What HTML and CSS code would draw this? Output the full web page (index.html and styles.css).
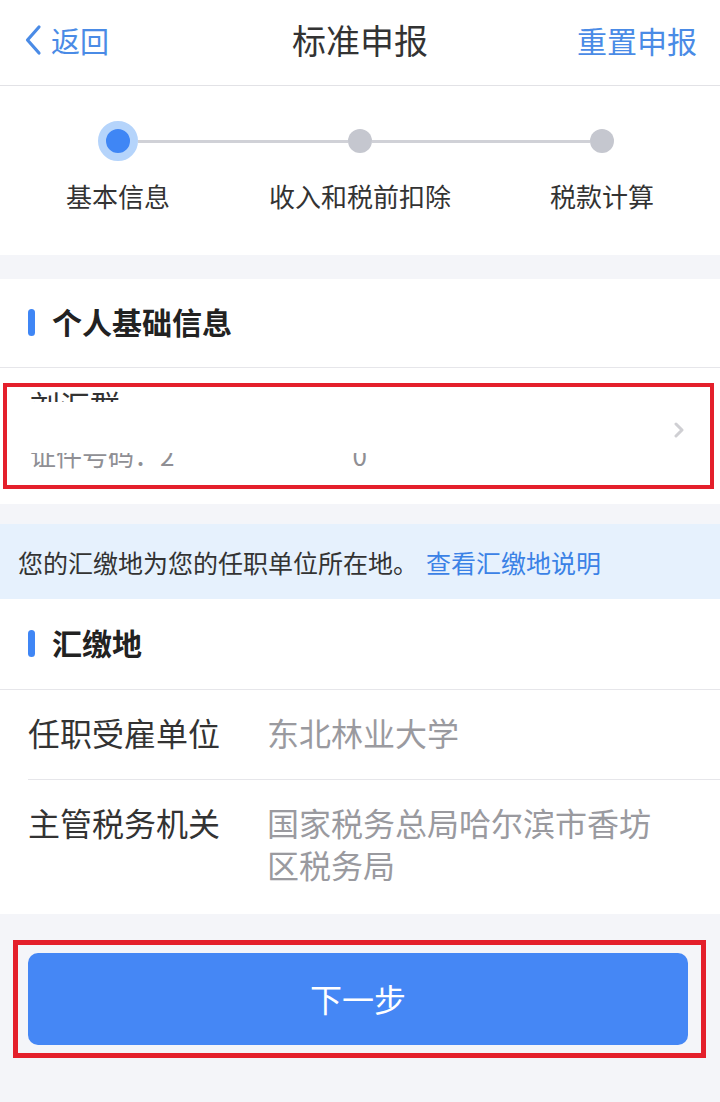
FILE: index.html
```html
<!DOCTYPE html>
<html lang="zh-CN">
<head>
<meta charset="utf-8">
<title>标准申报</title>
<link rel="stylesheet" href="styles.css">
</head>
<body>
<header class="nav">
  <a class="nav-back">
    <svg class="nav-back-icon" width="18" height="32" viewBox="0 0 18 32"><path d="M15 3 L3.5 16 L15 29" fill="none" stroke="#4a8be6" stroke-width="3.2" stroke-linecap="round" stroke-linejoin="round"/></svg>
    <span>返回</span>
  </a>
  <h1 class="nav-title">标准申报</h1>
  <a class="nav-reset">重置申报</a>
</header>

<section class="steps">
  <div class="step step-first step-active">
    <div class="step-track"><span class="step-line"></span><span class="step-dot"></span><span class="step-line"></span></div>
    <div class="step-label">基本信息</div>
  </div>
  <div class="step">
    <div class="step-track"><span class="step-line"></span><span class="step-dot"></span><span class="step-line"></span></div>
    <div class="step-label">收入和税前扣除</div>
  </div>
  <div class="step step-last">
    <div class="step-track"><span class="step-line"></span><span class="step-dot"></span><span class="step-line"></span></div>
    <div class="step-label">税款计算</div>
  </div>
</section>

<section class="card card-person">
  <div class="card-title">个人基础信息</div>
  <div class="person-row">
    <div class="person-info">
      <div class="person-name">刘汇群</div>
      <div class="person-id">证件号码：2<span class="id-gap"></span>0</div>
    </div>
    <svg class="person-arrow" width="12" height="16" viewBox="0 0 12 16"><path d="M3 2 L9 8 L3 14" fill="none" stroke="#cfcfd3" stroke-width="3" stroke-linecap="round" stroke-linejoin="round"/></svg>
    <div class="redact"></div>
  </div>
  <div class="annot annot-person"></div>
</section>

<div class="notice">您的汇缴地为您的任职单位所在地。<a class="notice-link">查看汇缴地说明</a></div>

<section class="card card-place">
  <div class="card-title">汇缴地</div>
  <div class="fields">
    <div class="field">
      <div class="field-label">任职受雇单位</div>
      <div class="field-value">东北林业大学</div>
    </div>
    <div class="field">
      <div class="field-label">主管税务机关</div>
      <div class="field-value">国家税务总局哈尔滨市香坊区税务局</div>
    </div>
  </div>
</section>

<div class="actions">
  <button class="btn-next">下一步</button>
  <div class="annot annot-btn"></div>
</div>
</body>
</html>
```

FILE: styles.css
```css
* { box-sizing: border-box; }
html, body { margin: 0; padding: 0; }
body {
  width: 720px;
  min-height: 1102px;
  background: #f4f5f9;
  font-family: "Noto Sans CJK SC", "Noto Sans", sans-serif;
  color: #333;
}
a { text-decoration: none; }

/* nav */
.nav {
  height: 86px;
  background: #fff;
  border-bottom: 1px solid #e2e2e6;
  display: grid;
  grid-template-columns: 1fr auto 1fr;
  align-items: center;
  padding-bottom: 6px;
}
.nav-back {
  display: flex;
  align-items: center;
  color: #4a8be6;
  font-size: 29px;
  line-height: 40px;
  padding-left: 24px;
}
.nav-back-icon { margin-right: 9px; }
.nav-title {
  margin: 0;
  font-size: 34px;
  font-weight: 400;
  line-height: 44px;
  color: #333;
}
.nav-reset {
  justify-self: end;
  padding-right: 23px;
  color: #4a8be6;
  font-size: 30px;
  line-height: 40px;
}

/* steps */
.steps {
  background: #fff;
  display: grid;
  grid-template-columns: repeat(3, 242px);
  justify-content: center;
  padding: 35px 0 41px;
  margin-bottom: 24px;
}
.step-track {
  display: flex;
  align-items: center;
  height: 40px;
}
.step-line {
  flex: 1;
  height: 3px;
  background: #d0d1d7;
}
.step-first .step-line:first-child,
.step-last .step-line:last-child { visibility: hidden; }
.step-dot {
  width: 24px;
  height: 24px;
  border-radius: 50%;
  background: #c5c7cf;
}
.step-active .step-dot {
  width: 40px;
  height: 40px;
  background: #3f86f5;
  border: 8px solid #b5d4fb;
}
.step-label {
  margin-top: 17px;
  text-align: center;
  font-size: 26px;
  line-height: 36px;
  color: #333;
}

/* cards */
.card {
  background: #fff;
  position: relative;
}
.card-title {
  height: 89px;
  border-bottom: 1px solid #e6e6ea;
  display: flex;
  align-items: center;
  padding: 0 0 5px 28px;
  font-size: 30px;
  font-weight: 700;
  color: #222;
}
.card-title::before {
  content: "";
  width: 7px;
  height: 27px;
  border-radius: 4px;
  background: #3f86f5;
  margin: 4px 17px 0 0;
}
.card-place .card-title { height: 91px; }

.person-row {
  position: relative;
  height: 136px;
  display: flex;
  justify-content: space-between;
  align-items: flex-start;
  padding: 16px 35px 0 30px;
}
.person-name {
  font-size: 30px;
  line-height: 40px;
  color: #333;
}
.person-id {
  margin-top: 13px;
  font-size: 26px;
  line-height: 36px;
  color: #8f8f94;
  display: flex;
}
.id-gap { width: 178px; }
.redact {
  position: absolute;
  left: 0;
  right: 0;
  top: 34px;
  height: 51px;
  background: #fff;
}
.person-arrow {
  position: relative;
  z-index: 1;
  margin-top: 38px;
}

.annot {
  position: absolute;
  border: 4px solid #e41f2b;
  pointer-events: none;
}
.annot-person {
  left: 3px;
  top: 104px;
  width: 711px;
  height: 106px;
}

/* notice */
.notice {
  margin-top: 20px;
  height: 75px;
  background: #e6f1fd;
  display: flex;
  align-items: center;
  padding-left: 18px;
  font-size: 25px;
  color: #333;
}
.notice-link {
  color: #3b82e6;
  margin-left: 8px;
}

/* fields */
.fields { padding-left: 28px; }
.field {
  display: flex;
  padding: 21px 0 26px;
  font-size: 32px;
  line-height: 42px;
  border-bottom: 1px solid #e6e6ea;
}
.field:last-child {
  border-bottom: 0;
  padding-bottom: 29px;
}
.field-label {
  width: 239px;
  flex-shrink: 0;
  color: #333;
}
.field-value {
  width: 400px;
  color: #9a9a9f;
}

/* actions */
.actions {
  position: relative;
  padding: 39px 32px 0 28px;
}
.btn-next {
  display: block;
  width: 100%;
  height: 92px;
  border: 0;
  border-radius: 10px;
  background: #4587f5;
  color: #fff;
  font-family: "Noto Sans CJK SC", "Noto Sans", sans-serif;
  font-size: 32px;
  padding-bottom: 4px;
}
.annot-btn {
  left: 13px;
  top: 26px;
  width: 693px;
  height: 118px;
  border-width: 5px;
}
```
